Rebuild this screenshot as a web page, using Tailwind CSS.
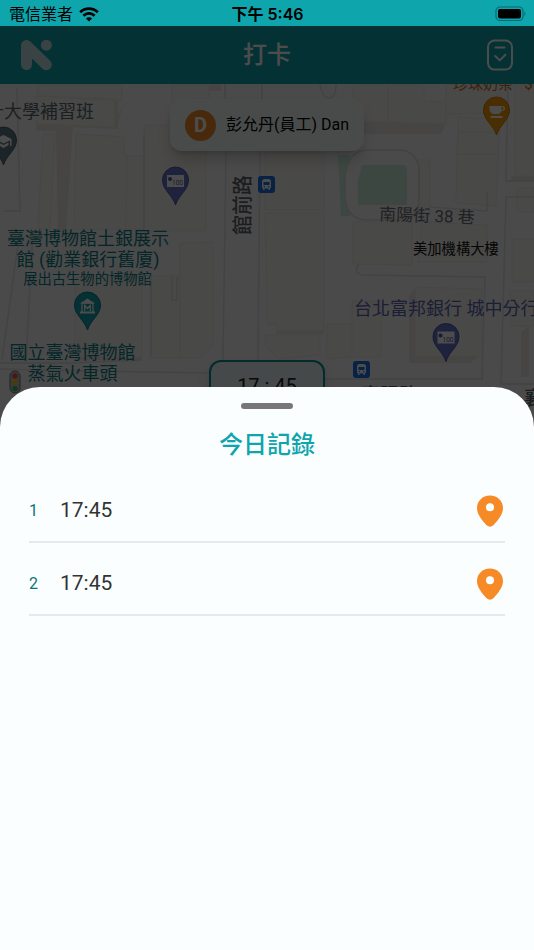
<!DOCTYPE html>
<html lang="zh-Hant">
  <head>
    <meta charset="UTF-8" />
    <meta name="viewport" content="width=device-width, initial-scale=1.0" />
    <title>打卡</title>
    <script src="https://cdn.jsdelivr.net/npm/@tailwindcss/browser@4"></script>
  </head>
  <body class="bg-[#fbfeff] min-h-screen flex flex-col overflow-x-hidden font-['Roboto','Noto_Sans_CJK_TC',sans-serif]">
    <!-- Status bar -->
    <div class="h-[26px] bg-[#0ea5ad] grid grid-cols-3 items-center pt-0.5 pl-[9px] pr-2 text-black font-['Inter','Noto_Sans_CJK_TC',sans-serif]">
      <div class="flex items-center gap-1.5">
        <span class="text-base leading-none">電信業者</span>
        <svg class="w-5 h-[15px]" viewBox="0 0 20 15" fill="none" stroke="black" stroke-width="2.7">
          <path d="M1.2 5.3a12.4 12.4 0 0 1 17.6 0" />
          <path d="M4.4 8.7a7.9 7.9 0 0 1 11.2 0" />
          <path d="M10 14.6l-3-3a4.2 4.2 0 0 1 6 0z" fill="black" stroke="none" />
        </svg>
      </div>
      <span class="text-center text-base leading-none font-semibold whitespace-nowrap">下午 5:46</span>
      <svg class="w-8 h-4 justify-self-end" viewBox="0 0 32 16">
        <rect x="2" y="1" width="27" height="13.500" rx="4" fill="none" stroke="#076a70" stroke-width="1.2" />
        <rect x="4" y="3" width="23" height="9.500" rx="2" />
        <path d="M30.500 5.500q2 2.300 0 4.600z" fill="#076a70" />
      </svg>
    </div>

    <div class="relative">
      <!-- App bar -->
      <header class="h-[58px] bg-[#0ea5ad] grid grid-cols-3 items-center px-5">
        <svg class="w-8 h-8" viewBox="0 0 32 32" fill="#c0dfe0">
          <path d="M6.500 6.500V25.500M6.500 6.500L26.300 25.700" stroke="#c0dfe0" stroke-width="11" stroke-linecap="round" />
          <circle cx="26.400" cy="6.200" r="5.500" />
        </svg>
        <h1 class="text-center text-2xl leading-none font-medium text-white">打卡</h1>
        <button class="justify-self-end" aria-label="打卡記錄">
          <svg class="w-7 h-8" viewBox="0 0 28 32" fill="none" stroke="white" stroke-width="2" stroke-linecap="round" stroke-linejoin="round">
            <rect x="2" y="1.600" width="24" height="29" rx="6.500" />
            <path d="M9.500 8.600h9M9.200 17l4.600 4.400 5.600-5.600" />
          </svg>
        </button>
      </header>

      <!-- Map -->
      <div class="relative h-[346px] overflow-hidden bg-[#f8f7f7]">
        <svg class="w-full h-full" viewBox="0 84 534 346" preserveAspectRatio="xMinYMin slice" font-family="Roboto, 'Noto Sans CJK TC', sans-serif">
          <defs>
            <g id="bank">
              <path d="M0 37C-3 27-13 22-13 12A13 13 0 0 1 13 12C13 22 3 27 0 37Z" fill="#6873c8" stroke="#5059a5" />
              <rect x="-8.500" y="7" width="17" height="12" fill="#fff" />
              <circle cx="-5.500" cy="11" r="2" fill="#5059a5" />
              <text x="2" y="17" font-size="6.500" text-anchor="middle" fill="#5059a5">100</text>
            </g>
            <g id="bus">
              <rect width="17" height="17" rx="3" fill="#1a73e8" />
              <path d="M4 12V5.500Q4 3 6.500 3H10.500Q13 3 13 5.500V12H12V14H10.500V12.500H6.500V14H5V12Z" fill="#fff" />
              <path d="M5.500 6h6v3h-6z" fill="#1a73e8" />
              <circle cx="6.300" cy="10.800" r="0.800" fill="#1a73e8" />
              <circle cx="10.700" cy="10.800" r="0.800" fill="#1a73e8" />
            </g>
          </defs>

          <!-- Building sides -->
          <g fill="#e9e6e4">
            <path d="M36 124L114 127L124 102L116 129L73 127V131H36ZM56 122H73L66 231H58ZM114 99H118V129H114ZM209 84h12v7h-12z" />
            <path d="M363 122L388 122L446 124L441 134H363ZM409 355H480L470 363H409ZM409 296L415 287V360H409ZM276 331H324V334H276ZM511 176H534V181H511ZM521 332L529 326V377H521ZM75 357H142V360H75Z" />
          </g>

          <!-- Buildings -->
          <g fill="#f5f3ef" stroke="#eeebe9">
            <path d="M37 84H122V101L38 96ZM35 96L114 99V127L36 124ZM43 134H55L50 229H38ZM76 134L124 137V156H144V229H74ZM127 156H144V229H126Z" />
            <path d="M144 125H206V231H144ZM172 84H209V122H172ZM265 152H324V210H265ZM265 213H324V331H277V324H267ZM353 84V122H388V84ZM424 84V101L446 102V124L388 122V84ZM446 84H508V114H446Z" />
            <path d="M180 243L213 242V346L201 358H180ZM75 277H142V357H75ZM150 276H180V358H150ZM265 335H320V355L278 359L266 346ZM327 324H352V357L326 359ZM352 301H381V357H352ZM415 287L482 289V356H415Z" />
            <path d="M458 117L500 119L496 206L456 203ZM459 132H499L497 154H457ZM415 160H430V213L413 212ZM422 222L487 225V262H418ZM353 222H412V265L353 264ZM515 84H534V176H515ZM517 188H534V212H517ZM512 239H534V282H512ZM510 291H534V326H510Z" />
          </g>

          <!-- Park -->
          <path d="M338 155H350V216H341Z" fill="#cdeedb" />
          <g fill="#f8f7f7" stroke="#dcdddf" stroke-width="1.500">
            <path d="M345 178Q347 150 369 150H400Q415 151 419 167V200Q419 213 407 220H366Q346 219 345 196Z" />
          </g>
          <path d="M362 165H403Q407 165 407 170V205H358V180Z" fill="#cdeedb" />

          <!-- Roads -->
          <g fill="none" stroke="#dfe0e2" stroke-width="1.500">
            <path d="M226 151L223 360M260 151L258 360M225 84V100M262 84V100M0 369L36 370L209 373M324 379H482L485 277L363 275Q352 273 359 264" />
            <path d="M430 207L487 211V192M508 84L506 181H534M534 197H506L501 384H534M17 88L20 211H4M20 230L2 360M33 230L26 362M144 134V231" />
            <path d="M320 84q2 14 9 14t7-14M0 363H70L142 360M151 276V356M172 277V300H177V277" />
          </g>

          <!-- Area labels -->
          <text x="-14" y="118" font-size="18" fill="#5b6a73">計大學補習班</text>
          <text x="379" y="220" font-size="17" fill="#6b7177" transform="rotate(2 379 220)">南陽街 38 巷</text>
          <text transform="translate(250 235) rotate(-90)" font-size="20" font-weight="500" fill="#5d6166">館前路</text>
          <text x="413" y="254" font-size="14.300" fill="#111">美加機構大樓</text>
          <g fill="#0c7f88" text-anchor="middle" font-size="18">
            <text x="88" y="245">臺灣博物館土銀展示</text>
            <text x="88" y="266">館 (勸業銀行舊廈)</text>
            <text x="87.500" y="284" font-size="14.300">展出古生物的博物館</text>
            <text x="72.500" y="359">國立臺灣博物館</text>
            <text x="72.500" y="380">蒸氣火車頭</text>
          </g>
          <text x="354" y="315" font-size="18" fill="#5c66b8">台北富邦銀行 城中分行</text>
          <text x="453" y="89" font-size="15" fill="#c86a1c">珍珠奶茶 · $50</text>
          <text x="361" y="402" font-size="19" font-weight="500" fill="#5d6166">襄陽路</text>
          <text x="524" y="405" font-size="19" font-weight="500" fill="#5d6166">襄陽路</text>

          <!-- Pins -->
          <use href="#bank" x="175.500" y="168" />
          <use href="#bank" x="446" y="324.500" />
          <use href="#bus" x="258" y="176" />
          <use href="#bus" x="353" y="361" />
          <g transform="translate(3.500 128)">
            <path d="M0 37C-3 27-13 22-13 12A13 13 0 0 1 13 12C13 22 3 27 0 37Z" fill="#5b7886" stroke="#48626e" />
            <path d="M-8 11L0 7L8 11V18H6.500V12.500L0 15.500ZM-5 14.500L0 17L5 14.500V17L0 20L-5 17Z" fill="#fff" />
          </g>
          <g transform="translate(496.500 98)">
            <path d="M0 37C-3 27-13 22-13 12A13 13 0 0 1 13 12C13 22 3 27 0 37Z" fill="#f29900" stroke="#d98200" />
            <path d="M-7 8H6Q8.500 8 8.500 10.500T5 13Q4 16 1 16H-3Q-7 15-7 11ZM-6 18H6V20H-6Z" fill="#fff" />
            <circle cx="5.800" cy="10.500" r="1.200" fill="#f29900" />
          </g>
          <g transform="translate(87.500 293)">
            <path d="M0 37C-3 27-13 22-13 12A13 13 0 0 1 13 12C13 22 3 27 0 37Z" fill="#12a4af" stroke="#0c7f88" />
            <path d="M-5.500 19V10H5.500V19M-2.800 18V12.500L0 15.500L2.800 12.500V18" fill="none" stroke="#fff" stroke-width="1.300" />
            <path d="M-7.500 10.500L0 5.500L7.500 10.500ZM-7.500 18.500H7.500V20.500H-7.500Z" fill="#fff" />
          </g>
          <g transform="translate(15 371)">
            <rect x="-5" y="0" width="10" height="22" rx="5" fill="#c4c4c8" stroke="#777" />
            <circle cy="5" r="2.700" fill="#ff4a3d" />
            <circle cy="11.300" r="2.700" fill="#ffc61a" />
            <circle cy="17.600" r="2.700" fill="#2fc45a" />
          </g>
        </svg>

        <div class="absolute top-[15px] left-1/2 -translate-x-1/2 h-[52px] px-[15px] flex items-center gap-2.5 rounded-xl bg-[#f3fbfc] shadow-lg shadow-black/20 whitespace-nowrap">
          <span class="size-[31px] rounded-full bg-[#f58a27] text-white text-xl leading-none font-bold flex items-center justify-center">D</span>
          <span class="text-base leading-none text-black">彭允丹(員工) Dan</span>
        </div>
        <div class="absolute top-[276px] left-1/2 -translate-x-1/2 w-[116px] h-16 pt-3.5 rounded-xl border-2 border-[#0c8f98] bg-[#e6f3f5] shadow-lg shadow-black/20 text-center text-xl leading-none text-[#222]">17 : 45</div>
      </div>

      <div class="absolute inset-0 bg-black/70"></div>
    </div>

    <!-- Bottom sheet -->
    <section class="relative flex-1 -mt-[43px] rounded-t-[40px] bg-[#fbfeff] px-[29px] pt-4">
      <div class="w-[52px] h-1.5 mx-auto rounded-full bg-[#777]"></div>
      <h2 class="mt-5 text-center text-2xl leading-8 font-medium text-[#0ea5ad]">今日記錄</h2>
      <ol class="mt-[9px]">
        <li class="h-[73px] border-b-2 border-[#e6e8eb] flex items-center pt-2.5 pr-0.5">
          <span class="w-[31px] text-base text-[#0c737a]">1</span>
          <span class="flex-1 text-[21px] text-[#333]">17:45</span>
          <button aria-label="位置 1">
            <svg class="w-[26px] h-8" viewBox="0 0 26 32">
              <path fill="#f58a27" fill-rule="evenodd" d="M13 0.500C20.500 0.500 26 6 26 13C26 19.500 21 25 16.700 30Q13 33.500 9.300 30C5 25 0 19.500 0 13C0 6 5.500 0.500 13 0.500ZM13 8.300a4 4 0 1 0 0 8 4 4 0 1 0 0-8Z" />
            </svg>
          </button>
        </li>
        <li class="h-[73px] border-b-2 border-[#e6e8eb] flex items-center pt-2.5 pr-0.5">
          <span class="w-[31px] text-base text-[#0c737a]">2</span>
          <span class="flex-1 text-[21px] text-[#333]">17:45</span>
          <button aria-label="位置 2">
            <svg class="w-[26px] h-8" viewBox="0 0 26 32">
              <path fill="#f58a27" fill-rule="evenodd" d="M13 0.500C20.500 0.500 26 6 26 13C26 19.500 21 25 16.700 30Q13 33.500 9.300 30C5 25 0 19.500 0 13C0 6 5.500 0.500 13 0.500ZM13 8.300a4 4 0 1 0 0 8 4 4 0 1 0 0-8Z" />
            </svg>
          </button>
        </li>
      </ol>
    </section>
  </body>
</html>
